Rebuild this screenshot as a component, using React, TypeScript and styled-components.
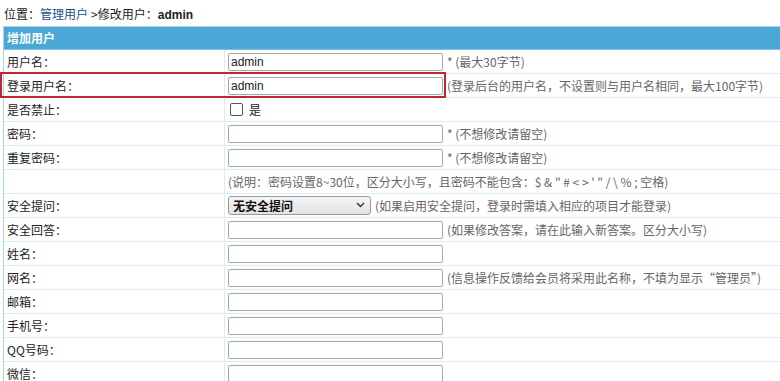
import React from "react";
import styled, { createGlobalStyle } from "styled-components";

const Global = createGlobalStyle`
  html, body { margin: 0; padding: 0; background: #fff; overflow: hidden; }
  body {
    font-family: "Noto Sans CJK SC", "Noto Sans", "Liberation Sans", sans-serif;
    font-size: 12px;
    color: #222;
  }
`;

const Page = styled.div`
  padding: 6px 0 0 4px;
`;

const Crumb = styled.div`
  height: 16px;
  line-height: 16px;
  font-size: 12px;
  color: #222;
  margin-bottom: 4px;
  white-space: nowrap;
`;

const CrumbLink = styled.a`
  color: #1d4e8f;
  text-decoration: none;
  margin-right: 3px;
`;

const Strong = styled.b`
  font-family: "Liberation Sans", "Noto Sans CJK SC", sans-serif;
  font-weight: bold;
`;

const Table = styled.div`
  margin-left: -1px;
  border-left: 1px solid #a8d4e8;
  border-top: 1px solid #a8d4e8;
`;

const Head = styled.div`
  height: 22px;
  line-height: 21px;
  background: #4aa7d6;
  color: #fff;
  font-weight: bold;
  padding-left: 3px;
  font-size: 12px;
  border-bottom: 1px solid #7fc1e2;
`;

const Row = styled.div`
  position: relative;
  display: grid;
  grid-template-columns: 221px 1fr;
  height: 23px;
  border-bottom: 1px solid #d8eef6;
`;

const Label = styled.div`
  display: flex;
  align-items: center;
  padding-left: 3px;
  border-right: 1px solid #d8eef6;
  color: #222;
  white-space: nowrap;
`;

const Value = styled.div`
  display: flex;
  align-items: center;
  padding-left: 3px;
  gap: 4px;
  white-space: nowrap;
  overflow: hidden;
`;

const Input = styled.input`
  box-sizing: border-box;
  flex: none;
  width: 215px;
  height: 18px;
  border: 1px solid #a6a6a6;
  border-radius: 2px;
  padding: 0 2px;
  font-family: "Liberation Sans", "Noto Sans", sans-serif;
  font-size: 12px;
  color: #222;
  outline: none;
  background: #fff;
`;

const Help = styled.span`
  color: #666;
  font-size: 12px;
`;

const CheckLabel = styled.label`
  display: flex;
  align-items: center;
  gap: 6px;
  padding-left: 2px;
  color: #222;
`;

const Box = styled.span`
  box-sizing: border-box;
  width: 13px;
  height: 13px;
  border: 1px solid #555;
  border-radius: 2px;
  background: #fff;
`;

const SelectWrap = styled.div`
  position: relative;
  box-sizing: border-box;
  flex: none;
  width: 143px;
  height: 19px;
  border: 1px solid #9a9a9a;
  border-radius: 3px;
  background: linear-gradient(#f6f6f6, #e2e2e2);
  display: flex;
  align-items: center;
  padding-left: 4px;
  font-weight: 600;
  color: #111;
`;

const Chevron = styled.svg`
  position: absolute;
  right: 5px;
  top: 5px;
`;

const Highlight = styled.div`
  position: absolute;
  left: -4px;
  top: -2px;
  width: 442px;
  height: 22px;
  border: 2px solid #c0262d;
  pointer-events: none;
`;

type F = { label: string; value?: string; help?: string; star?: boolean };

const rowsB: F[] = [
  { label: "安全回答：", help: "(如果修改答案，请在此输入新答案。区分大小写)" },
  { label: "姓名：" },
  { label: "网名：", help: "(信息操作反馈给会员将采用此名称，不填为显示“管理员”)" },
  { label: "邮箱：" },
  { label: "手机号：" },
  { label: "QQ号码：" },
  { label: "微信：" },
];

function FieldRow({ label, value, help, star }: F) {
  return (
    <Row>
      <Label>{label}</Label>
      <Value>
        <Input defaultValue={value ?? ""} />
        {(help || star) && <Help>{star ? "* " : ""}{help}</Help>}
      </Value>
    </Row>
  );
}

export default function App() {
  return (
    <Page>
      <Global />
      <Crumb>
        位置：<CrumbLink href="#">管理用户</CrumbLink>&gt;修改用户：<Strong>admin</Strong>
      </Crumb>
      <Table>
        <Head>增加用户</Head>
        <FieldRow label="用户名：" value="admin" star help="(最大30字节)" />
        <Row>
          <Highlight />
          <Label>登录用户名：</Label>
          <Value>
            <Input defaultValue="admin" />
            <Help>(登录后台的用户名，不设置则与用户名相同，最大100字节)</Help>
          </Value>
        </Row>
        <Row>
          <Label>是否禁止：</Label>
          <Value>
            <CheckLabel>
              <Box />
              是
            </CheckLabel>
          </Value>
        </Row>
        <FieldRow label="密码：" star help="(不想修改请留空)" />
        <FieldRow label="重复密码：" star help="(不想修改请留空)" />
        <Row>
          <Label />
          <Value>
            <Help>(说明：密码设置8~30位，区分大小写，且密码不能包含：$ &amp; " # &lt; &gt; ' " / \ % ; 空格)</Help>
          </Value>
        </Row>
        <Row>
          <Label>安全提问：</Label>
          <Value>
            <SelectWrap>
              无安全提问
              <Chevron width="9" height="6" viewBox="0 0 9 6">
                <path d="M1 1 L4.5 4.5 L8 1" stroke="#333" strokeWidth="1.4" fill="none" />
              </Chevron>
            </SelectWrap>
            <Help>(如果启用安全提问，登录时需填入相应的项目才能登录)</Help>
          </Value>
        </Row>
        {rowsB.map((r) => (
          <FieldRow key={r.label} {...r} />
        ))}
      </Table>
    </Page>
  );
}
